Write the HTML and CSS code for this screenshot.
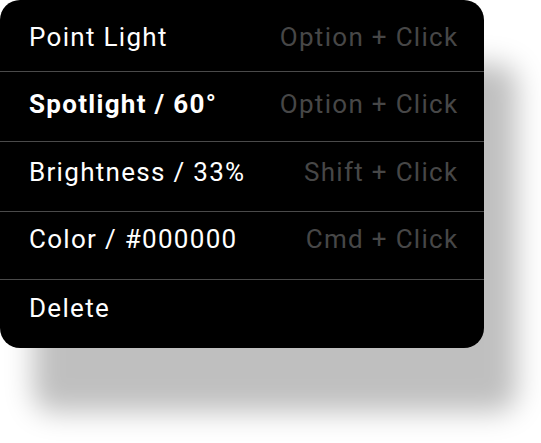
FILE: index.html
```html
<!DOCTYPE html>
<html lang="en">
<head>
<meta charset="utf-8">
<title>Light menu</title>
<link rel="stylesheet" href="styles.css">
</head>
<body>
<ul class="menu">
  <li class="item"><span class="label">Point Light</span><span class="shortcut">Option + Click</span></li>
  <li class="item"><span class="label bold">Spotlight / 60°</span><span class="shortcut">Option + Click</span></li>
  <li class="item"><span class="label">Brightness / 33%</span><span class="shortcut">Shift + Click</span></li>
  <li class="item"><span class="label">Color / #000000</span><span class="shortcut">Cmd + Click</span></li>
  <li class="item"><span class="label">Delete</span></li>
</ul>
</body>
</html>
```
FILE: styles.css
```css
html, body {
  margin: 0;
  padding: 0;
  background: #ffffff;
}
html {
  height: 100%;
}
body {
  min-height: 443px;
  font-family: Roboto, "Liberation Sans", sans-serif;
}
.menu {
  list-style: none;
  margin: 0;
  padding: 0;
  width: 484px;
  background: #000000;
  border-radius: 20px;
  box-shadow: 33px 64px 28px rgba(0, 0, 0, 0.25);
  overflow: hidden;
}
.item {
  display: flex;
  align-items: flex-start;
  justify-content: space-between;
  box-sizing: border-box;
  height: 70px;
  padding: 19.6px 25.5px 0 29px;
  border-bottom: 1.5px solid #4a4a4a;
  font-size: 26px;
  line-height: 1;
  letter-spacing: 1.3px;
}
.item:nth-child(1) {
  height: 71.5px;
  padding-top: 23.6px;
}
.item:nth-child(3) {
  padding-top: 17.6px;
}
.item:nth-child(4) {
  height: 68.5px;
  padding-top: 14.6px;
}
.item:nth-child(5) {
  height: 68px;
  padding-top: 14.6px;
  border-bottom: none;
}
.label {
  color: #ffffff;
}
.label.bold {
  font-weight: 700;
}
.shortcut {
  color: #474747;
}
```
